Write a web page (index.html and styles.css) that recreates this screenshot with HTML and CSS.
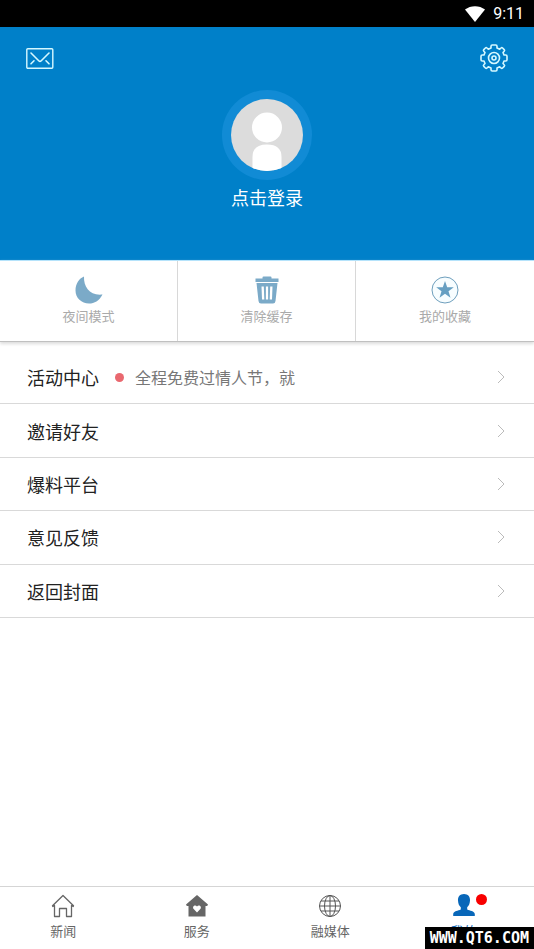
FILE: index.html
```html
<!DOCTYPE html>
<html lang="zh-CN">
<head>
<meta charset="utf-8">
<meta name="viewport" content="width=device-width, initial-scale=1">
<title>我的</title>
<link rel="stylesheet" href="styles.css">
</head>
<body>
<div class="status">
  <svg width="20" height="16" viewBox="0 0 20 16" aria-hidden="true"><path d="M0 3.600C5.600-.9 14.400-.9 20 3.600L10 16z" fill="#fff"/></svg>
  <span>9:11</span>
</div>
<header class="profile">
  <div class="actions">
    <button class="icon-button" aria-label="消息">
      <svg width="28" height="28" viewBox="0 0 28 28" fill="none" stroke="#d5f8ff" stroke-width="1.400" stroke-linecap="round" stroke-linejoin="round"><rect x=".8" y="4.700" width="26" height="19.600" rx="1"/><path d="M5 9l8 8q1 .900 2 0l8-8M5 19.800l3-3M23 19.800l-3-3" stroke-width="1.600"/></svg>
    </button>
    <button class="icon-button" aria-label="设置">
      <svg width="28" height="28" viewBox="0 0 28 28" fill="none" stroke="#d5f8ff" stroke-width="1.600" stroke-linejoin="round"><g id="gear"><path d="M11 4V2.200Q11 1 12.200 1h3.600Q17 1 17 2.200V4l2.700 1.200L21 4q.8-.8 1.600 0L24.200 5.600q.8.800 0 1.600L23 8.500 24 11h1.800Q27 11 27 12.200v3.600Q27 17 25.800 17H24l-1 2.500 1.200 1.300q.8.800 0 1.600L22.600 24q-.8.800-1.600 0l-1.300-1.200L17 24v1.800Q17 27 15.800 27h-3.600Q11 27 11 25.800V24l-2.700-1.200L7 24q-.8.800-1.600 0L3.800 22.400q-.8-.8 0-1.600L5 19.500 4 17H2.200Q1 17 1 15.800v-3.600Q1 11 2.200 11H4l1-2.500L3.800 7.200q-.8-.8 0-1.600L5.400 4Q6.200 3.200 7 4l1.300 1.200z"/><circle cx="14" cy="14" r="5.500"/><circle cx="14" cy="14" r="2"/></g></svg>
    </button>
  </div>
  <a class="login" href="#login">
    <span class="avatar"><svg width="72" height="72" viewBox="0 0 72 72" aria-hidden="true"><defs><clipPath id="disc"><circle cx="36" cy="36" r="36"/></clipPath></defs><g clip-path="url(#disc)"><path d="M0 0h72v72H0z" fill="#dcdcdc"/><circle cx="36" cy="28.500" r="15" fill="#fff"/><path d="M21.500 72V58Q21.500 45.500 36 45.500T50.500 58v14z" fill="#fff"/></g></svg></span>
    <span>点击登录</span>
  </a>
</header>
<section class="tools">
  <button class="tool">
    <svg width="28" height="28" viewBox="0 0 28 28" aria-hidden="true"><path d="M9 .500C8.500 11 15 20 27.500 18.500 24 25 19.500 27.500 14 27.500 6.500 27.500.500 22 .500 14.500.500 8 4 2.500 9 .500z" fill="#7baac8"/></svg>
    <span>夜间模式</span>
  </button>
  <button class="tool">
    <svg width="28" height="28" viewBox="0 0 28 28" aria-hidden="true"><path d="M2.500 2.500h7V1.500q0-1 1-1h7q1 0 1 1v1h7V6h-23zM3.500 7h21l-2 18q-.3 2.500-2.500 2.500H8q-2.200 0-2.500-2.500z" fill="#7baac8"/><path d="M8.500 10.500h2.300l.5 13H9zM12.900 10.500h2.200v13h-2.200zM17.200 10.500h2.300l-.5 13h-2.300z" fill="#fff"/></svg>
    <span>清除缓存</span>
  </button>
  <button class="tool">
    <svg width="28" height="28" viewBox="0 0 28 28" aria-hidden="true"><circle cx="14" cy="14" r="13" fill="#f7fdff" stroke="#6e9fbd"/><path d="M14 5l2.200 6.300h6.600l-5.300 4 2 6.400L14 17.800l-5.500 3.900 2-6.400-5.300-4h6.600z" fill="#669fc2"/></svg>
    <span>我的收藏</span>
  </button>
</section>
<main class="menu">
  <a class="row" href="#activity"><span>活动中心</span><i class="dot"></i><span class="note">全程免费过情人节，就</span><svg class="chevron" width="8" height="14" viewBox="0 0 8 14"><path d="M1 1l6 6-6 6"/></svg></a>
  <a class="row" href="#invite"><span>邀请好友</span><svg class="chevron" width="8" height="14" viewBox="0 0 8 14"><path d="M1 1l6 6-6 6"/></svg></a>
  <a class="row" href="#report"><span>爆料平台</span><svg class="chevron" width="8" height="14" viewBox="0 0 8 14"><path d="M1 1l6 6-6 6"/></svg></a>
  <a class="row" href="#feedback"><span>意见反馈</span><svg class="chevron" width="8" height="14" viewBox="0 0 8 14"><path d="M1 1l6 6-6 6"/></svg></a>
  <a class="row" href="#cover"><span>返回封面</span><svg class="chevron" width="8" height="14" viewBox="0 0 8 14"><path d="M1 1l6 6-6 6"/></svg></a>
</main>
<nav class="tabs">
  <a class="tab" href="#news">
    <svg width="24" height="24" viewBox="0 0 24 24" fill="none" stroke="#666" stroke-width="1.300" stroke-linejoin="round" aria-hidden="true"><path d="M3.500 11.500L1.800 12.500 1.500 11.800 12 1.500l10.500 10.300-.3.700-1.700-1V22.500h-5v-8h-7v8h-5z"/></svg>
    <span>新闻</span>
  </a>
  <a class="tab" href="#service">
    <svg width="24" height="24" viewBox="0 0 24 24" aria-hidden="true"><path d="M12 1l11 9.500-.8 1.500h-1.700v10.500h-17V12H1.800L1 10.500z" fill="#666"/><path d="M12 18.500l-3.300-3.400c-2-2.600 1.500-5 3.300-2.600 1.800-2.400 5.300 0 3.300 2.600z" fill="#fff"/></svg>
    <span>服务</span>
  </a>
  <a class="tab" href="#media">
    <svg width="24" height="24" viewBox="0 0 24 24" fill="none" stroke="#555" aria-hidden="true"><circle cx="12" cy="12" r="10.500"/><ellipse cx="12" cy="12" rx="5.500" ry="10.500"/><path d="M12 1.500v21M1.500 12h21M3 7h18M3 17h18"/></svg>
    <span>融媒体</span>
  </a>
  <a class="tab active" href="#me" aria-current="page">
    <svg width="24" height="24" viewBox="0 0 24 24" aria-hidden="true"><path d="M12 0c4 0 6.300 2.800 6 6.500-.2 3.500-1.200 5.300-2.800 6.700v2.300c2.500 1.400 7.300 1.300 7.600 4.500V22H1.200v-2c.3-3.200 5.100-3.100 7.600-4.500v-2.300C7.200 11.800 6.200 10 6 6.500 5.700 2.800 8 0 12 0z" fill="#0867b9"/></svg>
    <i class="badge"></i>
    <span>我的</span>
  </a>
</nav>
<div class="watermark">WWW.QT6.COM</div>
</body>
</html>
```
FILE: styles.css
```css
* {
  box-sizing: border-box;
}

body {
  margin: 0;
  min-height: 100vh;
  display: flex;
  flex-direction: column;
  background: #fff;
  color: #222;
  font-family: "Noto Sans CJK SC", sans-serif;
  font-size: 18px;
  line-height: 26px;
}

a {
  color: inherit;
  text-decoration: none;
}

button {
  border: 0;
  padding: 0;
  background: none;
  font-family: inherit;
  cursor: pointer;
}

svg {
  display: block;
  flex: none;
}

.status {
  height: 27px;
  padding: 0 10px;
  display: flex;
  justify-content: flex-end;
  align-items: center;
  gap: 8px;
  background: #000;
  color: #fff;
  font: 16px/29px Roboto, sans-serif;
}

.profile {
  padding: 17px 26px 50px;
  background: #0080c9;
  color: #fff;
}

.actions {
  display: flex;
  justify-content: space-between;
}

.login {
  display: flex;
  flex-direction: column;
  align-items: center;
  width: max-content;
  margin: 18px auto 0;
  gap: 4px;
}

.avatar {
  padding: 9px;
  border-radius: 50%;
  background: #118bd5;
}

.tools {
  display: grid;
  grid-template-columns: repeat(3, 1fr);
  border-top: 1px solid #b5e3fb;
  border-bottom: 1px solid #c0c0c0;
  box-shadow: 0 2px 3px #ddd;
}

.tool {
  height: 80px;
  padding-top: 15px;
  display: flex;
  flex-direction: column;
  align-items: center;
  gap: 2px;
  border-right: 1px solid #d8d8d8;
  color: #aaa;
  font-size: 13px;
  line-height: 20px;
}

.tool:last-child {
  border-right: 0;
}

.menu {
  flex: 1;
  padding-top: 9px;
  display: grid;
  grid-template-rows: repeat(5, minmax(0, 1fr));
  max-height: 276px;
}

.row {
  padding: 0 29px 0 27px;
  display: flex;
  align-items: center;
  border-bottom: 1px solid #d9d9d9;
}

.dot {
  width: 9px;
  height: 9px;
  margin: 0 11px 0 16px;
  border-radius: 50%;
  background: #e9686f;
}

.note {
  color: #777;
  font-size: 16px;
}

.chevron {
  margin-left: auto;
  fill: none;
  stroke: #bbb;
}

.tabs {
  margin-top: auto;
  height: 63px;
  display: grid;
  grid-template-columns: repeat(4, 1fr);
  border-top: 1px solid #d5d5d5;
}

.tab {
  position: relative;
  padding: 7px 7px 0 0;
  display: flex;
  flex-direction: column;
  align-items: center;
  gap: 3px;
  color: #666;
  font-size: 13px;
  line-height: 20px;
}

.active {
  color: #0867b9;
}

.badge {
  position: absolute;
  left: calc(50% + 9px);
  top: 7px;
  width: 11px;
  height: 11px;
  border-radius: 50%;
  background: #f80000;
}

.watermark {
  position: fixed;
  right: 0;
  bottom: 0;
  padding: 0 5px;
  background: #000;
  color: #fff;
  font: bold 15px/22px "DejaVu Sans Mono", monospace;
}
```
